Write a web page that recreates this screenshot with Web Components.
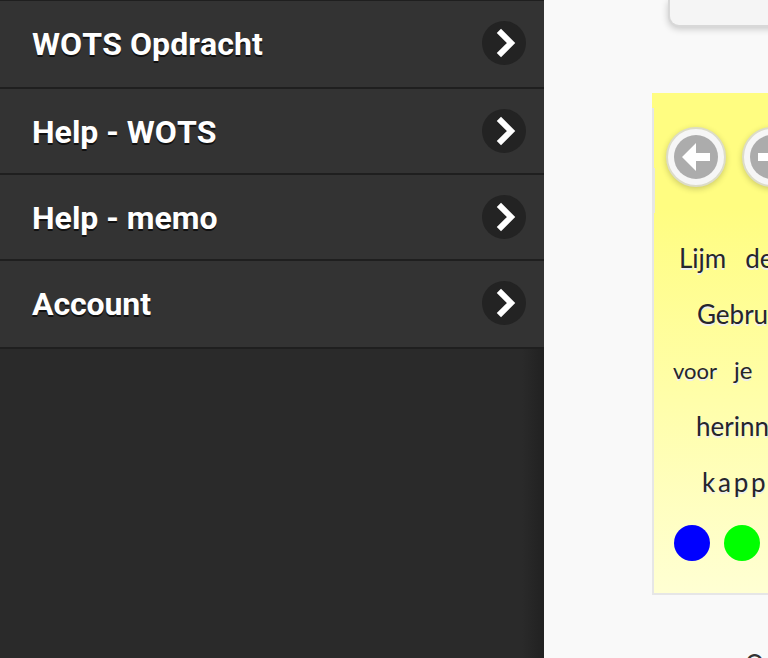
<!DOCTYPE html>
<html lang="nl"><head><meta charset="utf-8"><title>WOTS memo</title>
<style>html,body{margin:0;height:100%;overflow:hidden}body{font-family:Roboto,sans-serif;background:#f9f9f9}</style></head>
<body><memo-app></memo-app>
<script>
const define=(name,html)=>{
  const t=document.createElement('template');t.innerHTML=html;
  customElements.define(name,class extends HTMLElement{
    constructor(){super();this.attachShadow({mode:'open'}).append(t.content.cloneNode(true));}
  });
};
define('menu-row',`<style>
:host{display:flex;box-sizing:border-box;height:var(--h,86px);align-items:flex-start;justify-content:space-between;padding:20px 18px 0 32px;background:#333;border-bottom:2px solid #1f1f1f;color:#fff;font:700 32px/44px Roboto,sans-serif;font-kerning:none;text-shadow:0 2px 0 #111}
span{padding-top:1px;white-space:nowrap}
svg{display:block;width:44px;height:44px;flex:none}
</style><span><slot></slot></span><svg viewBox="0 0 44 44"><circle cx="22" cy="22" r="22" fill="#232323"/><path d="M16.9 9.9 29 22 16.9 34.1" fill="none" stroke="#fff" stroke-width="6"/></svg>`);
define('side-menu',`<style>
:host{display:flex;flex-direction:column;box-sizing:border-box;width:544px;height:658px;flex:none;border-top:1px solid #1f1f1f;background:#2a2a2a}
.rest{flex:1;background:linear-gradient(90deg,transparent 522px,#212121 544px)}
</style><slot></slot><div class="rest"></div>`);
define('round-button',`<style>
:host{display:block;box-sizing:border-box;width:60px;height:60px;border:2px solid #dcdcc8;border-radius:50%;background:#f6f6f6;box-shadow:0 2px 6px #0003;padding:6px;flex:none}
svg{display:block;width:44px;height:44px;transform:var(--turn,none)}
</style><svg viewBox="0 0 44 44"><circle cx="22" cy="22" r="22" fill="#acacac"/><path d="M8 22 22 8v10h14v8H22v10z" fill="#fff"/></svg>`);
define('color-dot',`<style>:host{display:block;width:36px;height:36px;border-radius:50%;background:var(--dot);flex:none}</style>`);
define('note-line',`<style>:host{display:flex;height:56px;align-items:baseline;white-space:pre;color:#25252d;font:400 26px/56px Lato,sans-serif;text-shadow:0 2px 0 #eee}</style><slot></slot>`);
define('memo-note',`<style>
:host{display:block;box-sizing:border-box;width:200px;height:502px;margin:66px 0 0 108px;border-left:2px solid #e6e6e6;border-bottom:2px solid #e6e6e6;background:linear-gradient(#fffd81 0,#fffd81 23%,#ffffd3);position:relative}
:host::before{content:"";position:absolute;left:-2px;top:0;width:2px;height:15px;background:#fffd81}
:host::after{content:"";position:absolute;left:0;top:75px;width:1px;height:45px;background:#e8e8df}
.tools{display:flex;gap:16px;padding:34px 0 0 12px}
.text{display:block;margin-top:43px}
.dots{display:flex;gap:14px;margin:15px 0 0 20px}
</style><div class="tools"><slot name="tools"></slot></div><div class="text"><slot></slot></div><div class="dots"><slot name="dots"></slot></div>`);
define('top-card',`<style>:host{display:block;box-sizing:border-box;width:160px;height:27px;margin-left:124px;border:2px solid #d8d8d8;border-top:0;border-radius:0 0 0 11px;background:#f5f5f5;box-shadow:0 2px 7px #0003}</style>`);
define('page-title',`<style>:host{display:block;padding:54px 0 0 201px;color:#333;font:400 28px/32px Roboto,sans-serif;white-space:nowrap}</style><slot></slot>`);
define('memo-app',`<style>
:host{display:flex;width:768px;height:658px;overflow:hidden;background:#f9f9f9}
main{width:224px;height:658px;overflow:hidden}
</style>
<side-menu>
<menu-row style="--h:88px;letter-spacing:.08px">WOTS Opdracht</menu-row>
<menu-row>Help - WOTS</menu-row>
<menu-row>Help - memo</menu-row>
<menu-row style="--h:88px;letter-spacing:-.1px">Account</menu-row>
</side-menu>
<main><top-card></top-card>
<memo-note><round-button slot="tools"></round-button><round-button slot="tools" style="--turn:scaleX(-1)"></round-button>
<note-line style="padding-left:25px"><span>Lijm</span><span style="margin-left:19px">de</span></note-line>
<note-line style="padding-left:43px"><span>Gebru</span></note-line>
<note-line style="padding-left:19px"><span style="font-size:22px">voor</span><span style="margin-left:17px;font-size:24px">je</span></note-line>
<note-line style="padding-left:42px"><span>herinn</span></note-line>
<note-line style="padding-left:48px"><span style="letter-spacing:2.8px">kapp</span></note-line>
<color-dot slot="dots" style="--dot:#00f"></color-dot><color-dot slot="dots" style="--dot:#0f0"></color-dot></memo-note>
<page-title>O</page-title></main>`);
</script></body></html>
